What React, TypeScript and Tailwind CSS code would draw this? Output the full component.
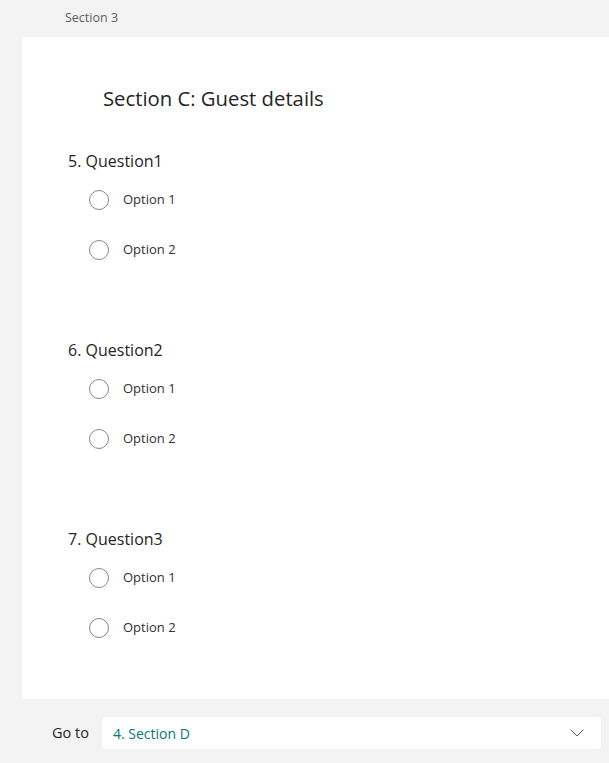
import { ChevronDown } from "lucide-react";

const questions = [
  { num: 5, title: "Question1" },
  { num: 6, title: "Question2" },
  { num: 7, title: "Question3" },
];

const RadioOption = ({ label }: { label: string }) => (
  <label className="flex items-center h-5 ml-[21px] gap-[14px]">
    <span className="w-5 h-5 rounded-full border border-[#8a8886] bg-white shrink-0" />
    <span className="text-[13px] text-[#323130]">{label}</span>
  </label>
);

const App = () => {
  return (
    <div
      className="min-h-[763px] bg-[#f3f3f3] flex flex-col"
      style={{ fontFamily: '"Open Sans", "Noto Sans", sans-serif' }}
    >
      {/* Section header */}
      <div className="h-[37px] flex items-center pl-[65px] text-[12.5px] text-[#605e5c]">
        Section 3
      </div>

      {/* Card */}
      <div className="ml-[22px] bg-white pt-[47px] pb-[61px]">
        <h2 className="pl-[81px] text-[20.3px] leading-[28px] text-[#252423]">
          Section C: Guest details
        </h2>

        <div className="pl-[46px] mt-[37px] flex flex-col gap-[78px]">
          {questions.map((q) => (
            <div key={q.num}>
              <div className="text-[16px] leading-[24px] text-[#252423]">
                {q.num}. {q.title}
              </div>
              <div className="mt-[17px] flex flex-col gap-[30px]">
                <RadioOption label="Option 1" />
                <RadioOption label="Option 2" />
              </div>
            </div>
          ))}
        </div>
      </div>

      {/* Go to */}
      <div className="flex items-center pt-[18px] pl-[52px] pr-2 gap-[13px]">
        <span className="text-[14.5px] text-[#252423]">Go to</span>
        <div className="flex-1 h-8 bg-white rounded flex items-center justify-between pl-[11px] pr-[12px]">
          <span className="text-[14px] text-[#03787c]">4. Section D</span>
          <ChevronDown size={24} strokeWidth={1} className="text-[#605e5c]" />
        </div>
      </div>
    </div>
  );
};

export default App;
